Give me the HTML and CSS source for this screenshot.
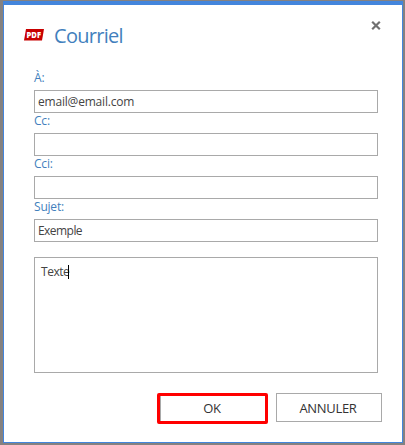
FILE: index.html
```html
<!DOCTYPE html>
<html lang="fr">
<head>
<meta charset="utf-8">
<title>Courriel</title>
<link rel="stylesheet" href="styles.css">
</head>
<body>
<main class="dialog">
  <header class="header">
    <svg class="logo" width="20" height="12" viewBox="0 0 20 12">
      <path d="M2 0H20L18 11.5H0Z" fill="#c80000"/>
      <text class="logo-text" x="2.6" y="8.7" textLength="14.4" lengthAdjust="spacingAndGlyphs">PDF</text>
    </svg>
    <h1 class="title"><span>Courriel</span></h1>
    <svg class="close" width="10" height="9" viewBox="0 0 10 9"><path d="M1.2 .8L8.8 8.2M8.8 .8L1.2 8.2" stroke="#707070" stroke-width="2.2"/></svg>
  </header>
  <div class="form">
    <div class="label to">À:</div>
    <div class="field email">email@email.com</div>
    <div class="label cc">Cc:</div>
    <div class="field"></div>
    <div class="label cci">Cci:</div>
    <div class="field"></div>
    <div class="label subject">Sujet:</div>
    <div class="field example">Exemple</div>
    <div class="message"><span>Texte</span><i class="caret"></i></div>
  </div>
  <footer class="actions">
    <div class="button ok"><span>OK</span></div>
    <div class="button cancel"><span>ANNULER</span></div>
  </footer>
</main>
</body>
</html>
```
FILE: styles.css
```css
* { box-sizing: border-box; }
body {
  margin: 0;
  padding: 1px 2px 2px 3px;
  height: 445px;
  overflow: hidden;
  background: #858180;
  font: 12px/20px "Open Sans", "Noto Sans", sans-serif;
  color: #444;
}
.dialog {
  height: 442px;
  background: #fff;
  border: 1px solid #4385dc;
  border-top-width: 4px;
}
.header {
  display: flex;
  align-items: flex-start;
  height: 62px;
  padding: 0 21px 0 20px;
}
.logo { margin-top: 24px; }
.logo-text { font: 800 8.5px "Open Sans", sans-serif; fill: #fff; }
.title {
  margin: 16px 0 0 10px;
  font-size: 20px;
  line-height: 30px;
  letter-spacing: -0.7px;
  font-weight: 400;
  color: #427fbd;
  flex: 1;
}
.close { margin-top: 16px; }
.form { width: 344px; margin-left: 30px; }
.label { height: 20px; line-height: 16px; letter-spacing: -0.2px; color: #427fbd; }
.to { height: 23px; line-height: 21px; }
.field {
  height: 23px;
  border: 1px solid #a9a9a9;
  padding-left: 3px;
  line-height: 21px;
}
.email { letter-spacing: -0.2px; }
.example { letter-spacing: -0.55px; }
.message {
  display: flex;
  height: 116px;
  margin-top: 15px;
  padding: 4px 6px;
  border: 1px solid #a9a9a9;
  letter-spacing: -0.45px;
}
.caret { width: 1px; height: 14px; margin: 3px 0 0 -1px; background: #000; }
.actions {
  display: flex;
  justify-content: flex-end;
  gap: 8px;
  margin: 20px 20px 0 0;
}
.button {
  display: flex;
  justify-content: center;
  width: 106px;
  height: 29px;
  border: 1px solid #a9a9a9;
  line-height: 29px;
  font-size: 13px;
  letter-spacing: -0.3px;
  color: #333;
}
.cancel { padding-right: 2px; }
.ok { width: 111px; height: 31px; padding-right: 1px; border: 3px solid #f00; border-radius: 2px; line-height: 25px; box-shadow: inset 1px 0 #a9a9a9; }
```
